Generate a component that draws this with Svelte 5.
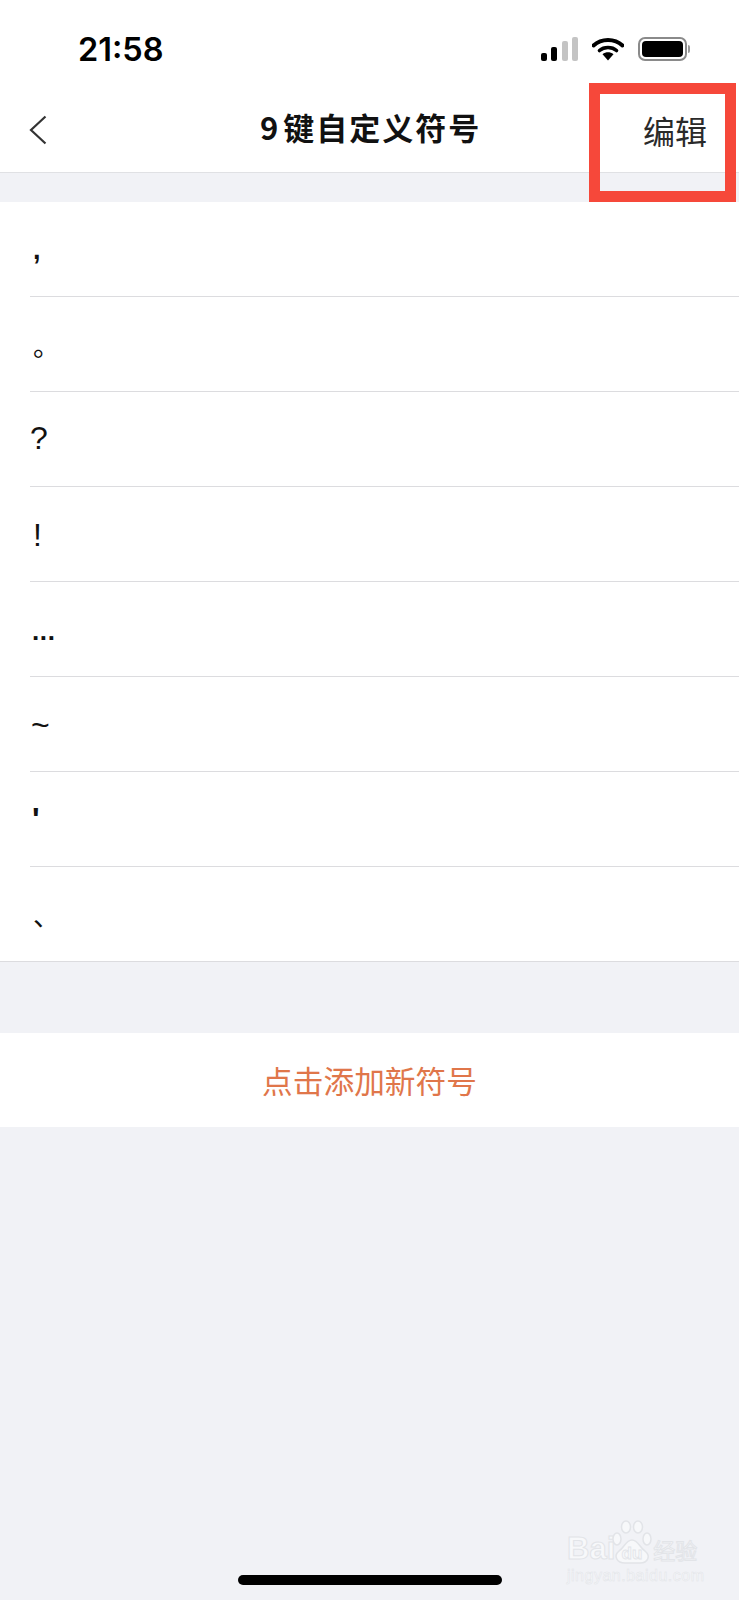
<script lang="ts">
const symbols = [
  { id: "comma", char: "," },
  { id: "period", char: "。" },
  { id: "question", char: "?" },
  { id: "bang", char: "!" },
  { id: "dots", char: "..." },
  { id: "tilde", char: "~" },
  { id: "quote", char: "'" },
  { id: "pause", char: "、" },
];
</script>

<div class="page">
  <header class="top">
    <div class="status">
      <span class="time">21:58</span>
      <div class="status-icons">
        <svg class="signal" width="37" height="24" viewBox="0 0 37 24">
          <rect x="0" y="16" width="6" height="8" rx="2" fill="#000" />
          <rect x="10" y="10" width="6" height="14" rx="2" fill="#000" />
          <rect x="21" y="4" width="6" height="20" rx="2" fill="#c4c4c4" />
          <rect x="31" y="0" width="6" height="24" rx="2" fill="#c4c4c4" />
        </svg>
        <svg class="wifi" width="32" height="24" viewBox="0 0 32 24">
          <path d="M1.500 8.500C9.500 1 22.500 1 30.500 8.500" fill="none" stroke="#000" stroke-width="4" stroke-linecap="round" />
          <path d="M7.500 13.500C12 9.500 20 9.500 24.500 13.500" fill="none" stroke="#000" stroke-width="3.600" stroke-linecap="round" />
          <path d="M10.500 17.200C14 14.700 18 14.700 21.500 17.200L16 23.500Z" fill="#000" />
        </svg>
        <div class="battery">
          <div class="battery-body"><div class="battery-fill"></div></div>
          <div class="battery-cap"></div>
        </div>
      </div>
    </div>
    <nav class="nav">
      <svg class="back" width="18" height="30" viewBox="0 0 18 30">
        <path d="M16.500 1.500L2 15L16.500 28.500" fill="none" stroke="#333" stroke-width="2.200" />
      </svg>
      <h1 class="title"><span class="title-num">9</span>键自定义符号</h1>
      <span class="edit">编辑</span>
    </nav>
  </header>

  <ul class="list">
    {#each symbols as s (s.id)}
      <li class="row {s.id}"><span class="char">{s.char}</span></li>
    {/each}
  </ul>

  <div class="add">点击添加新符号</div>

  <div class="home-wrap"><div class="home"></div></div>

  <div class="marker"></div>

  <div class="watermark">
    <div class="wm-top">
      <span class="wm-bai">Bai</span>
      <svg class="paw" width="40" height="44" viewBox="0 0 40 44">
        <g fill="#f7f8fa" stroke="#e2e4e8" stroke-width="1.500">
          <ellipse cx="5" cy="19" rx="4" ry="6" />
          <ellipse cx="14" cy="7" rx="4.500" ry="6" />
          <ellipse cx="26" cy="7" rx="4.500" ry="6" />
          <ellipse cx="35" cy="19" rx="4" ry="6" />
          <path d="M20 20C14 20 12 28 7 31C1 36 5 43 13 43C17 43 23 43 28 43C36 43 39 36 33 31C28 28 26 20 20 20Z" />
        </g>
        <text class="wm-du" x="20" y="39" text-anchor="middle">du</text>
      </svg>
      <span class="wm-cn">经验</span>
    </div>
    <div class="wm-url">jingyan.baidu.com</div>
  </div>
</div>

<style>
  :global(body) {
    margin: 0;
    background: #f1f2f6;
  }

  .page {
    position: relative;
    display: flex;
    flex-direction: column;
    height: 1600px;
    overflow: hidden;
    background: #f1f2f6;
    font-family: "Noto Sans CJK SC", "Liberation Sans", sans-serif;
    color: #111;
  }

  .top {
    background: #fff;
    border-bottom: 1px solid #e0e1e4;
  }

  .status {
    display: flex;
    align-items: center;
    justify-content: space-between;
    height: 83px;
    padding: 16px 49px 0 78px;
    box-sizing: border-box;
  }

  .time {
    font-family: Inter, "Liberation Sans", sans-serif;
    font-size: 32.500px;
    font-weight: 600;
    line-height: 30px;
    color: #000;
  }

  .status-icons {
    display: flex;
    align-items: center;
    gap: 14px;
    margin-top: -2px;
  }

  .battery {
    display: flex;
    align-items: center;
    gap: 1px;
  }

  .battery-body {
    width: 49px;
    height: 24px;
    box-sizing: border-box;
    padding: 2px;
    border: 2px solid #8a8a8a;
    border-radius: 7px;
  }

  .battery-fill {
    height: 100%;
    background: #000;
    border-radius: 4px;
  }

  .battery-cap {
    width: 2px;
    height: 8px;
    background: #9a9a9a;
    border-radius: 0 2px 2px 0;
  }

  .nav {
    position: relative;
    display: flex;
    align-items: center;
    justify-content: space-between;
    height: 89px;
    padding: 4px 32px 0 29px;
    box-sizing: border-box;
  }

  .title {
    position: absolute;
    left: 260px;
    top: 24px;
    margin: 0;
    font-size: 31px;
    font-weight: 700;
    line-height: 40px;
    letter-spacing: 2px;
    color: #111;
  }

  .title-num {
    margin-right: 3px;
  }

  .edit {
    font-size: 32px;
    line-height: 40px;
    color: #2a2a2a;
  }

  .list {
    list-style: none;
    margin: 29px 0 0;
    padding: 0;
    background: #fff;
  }

  .row {
    display: flex;
    align-items: center;
    height: 95px;
    box-sizing: border-box;
    margin-left: 30px;
    border-bottom: 1px solid #dcdcdf;
    font-size: 32px;
    color: #111;
    font-family: "Liberation Sans", "Noto Sans CJK SC", sans-serif;
  }

  .row:last-child {
    margin-left: 0;
    padding-left: 30px;
  }

  .char {
    display: block;
    line-height: 40px;
  }

  .comma .char {
    font-size: 27px;
    font-weight: 700;
    transform: translate(3px, 1px);
  }

  .period .char,
  .pause .char {
    font-family: "Noto Sans CJK SC", sans-serif;
    font-size: 27px;
  }

  .period .char {
    transform: translate(3px, 1px);
  }

  .question .char {
    transform: translate(0, -1px);
  }

  .bang .char {
    transform: translate(3px, 1px);
  }

  .dots .char {
    font-size: 26px;
    font-weight: 700;
    letter-spacing: 0.600px;
    transform: translate(2px, 2px);
  }

  .tilde .char {
    transform: translate(1px, 1px);
  }

  .quote .char {
    font-weight: 700;
    transform: translate(2px, 0);
  }

  .pause .char {
    transform: translate(3px, 1px);
  }

  .add {
    display: flex;
    align-items: center;
    justify-content: center;
    height: 94px;
    margin-top: 71px;
    padding-bottom: 2px;
    box-sizing: border-box;
    background: #fff;
    font-size: 30.700px;
    color: #e0764a;
  }

  .home-wrap {
    margin-top: auto;
    padding: 0 0 15px 238px;
  }

  .home {
    width: 264px;
    height: 10px;
    border-radius: 5px;
    background: #000;
  }

  .marker {
    position: absolute;
    left: 589px;
    top: 83px;
    width: 147px;
    height: 119px;
    box-sizing: border-box;
    border: 11px solid #f6483a;
  }

  .watermark {
    position: absolute;
    left: 567px;
    top: 1520px;
    width: 136px;
    color: #f7f8fa;
    -webkit-text-stroke: 1px #e2e4e8;
  }

  .wm-top {
    display: flex;
    align-items: flex-end;
    height: 44px;
    white-space: nowrap;
  }

  .wm-bai {
    font-family: "Liberation Sans", sans-serif;
    font-size: 31px;
    font-weight: 700;
    line-height: 30px;
  }

  .paw {
    margin-left: -3px;
  }

  .wm-du {
    font-family: "Liberation Sans", sans-serif;
    font-size: 17px;
    font-weight: 700;
    fill: #f7f8fa;
    stroke: #e2e4e8;
    stroke-width: 0.800px;
    -webkit-text-stroke: 0;
  }

  .wm-cn {
    font-size: 22px;
    line-height: 30px;
    margin-left: 1px;
  }

  .wm-url {
    font-family: "Liberation Sans", sans-serif;
    font-size: 16px;
    line-height: 20px;
    letter-spacing: 0.500px;
    margin-top: 2px;
    white-space: nowrap;
    -webkit-text-stroke: 0.500px #e2e4e8;
  }
</style>
